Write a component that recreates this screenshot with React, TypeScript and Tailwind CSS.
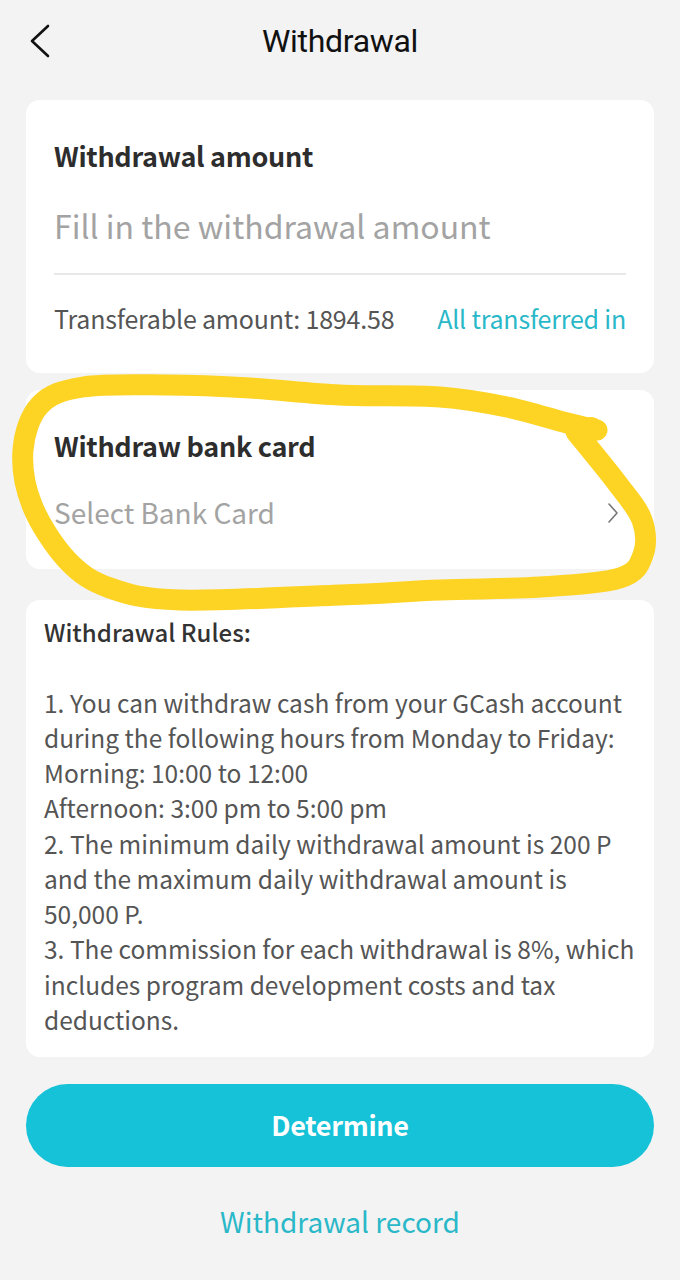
import React from 'react'

const sans = "font-['Noto_Sans_CJK_SC','Noto_Sans',sans-serif]"

// hand-drawn highlight round the bank card box
const mark: [number, number][] = [
  [597, 430], [567, 423], [507, 407], [440, 397], [340, 395], [250, 388], [167, 385],
  [83, 387], [40, 405], [23, 450], [32, 505], [67, 560], [110, 588], [180, 600],
  [340, 595], [440, 590], [540, 587], [620, 578], [643, 555], [642, 520], [617, 483], [576, 432],
]

function smoothPath(pts: [number, number][]) {
  let d = `M${pts[0][0]},${pts[0][1]}`
  for (let i = 0; i < pts.length - 1; i++) {
    const p0 = pts[i - 1] ?? pts[i]
    const p1 = pts[i]
    const p2 = pts[i + 1]
    const p3 = pts[i + 2] ?? p2
    const c1x = p1[0] + (p2[0] - p0[0]) / 6
    const c1y = p1[1] + (p2[1] - p0[1]) / 6
    const c2x = p2[0] - (p3[0] - p1[0]) / 6
    const c2y = p2[1] - (p3[1] - p1[1]) / 6
    d += ` C${c1x},${c1y} ${c2x},${c2y} ${p2[0]},${p2[1]}`
  }
  return d
}

// lines broken as the app shows them
const rules = [
  '1. You can withdraw cash from your GCash account',
  'during the following hours from Monday to Friday:',
  'Morning: 10:00 to 12:00',
  'Afternoon: 3:00 pm to 5:00 pm',
  '2. The minimum daily withdrawal amount is 200 P',
  'and the maximum daily withdrawal amount is',
  '50,000 P.',
  '3. The commission for each withdrawal is 8%, which',
  'includes program development costs and tax',
  'deductions.',
]

export default function App() {
  return (
    <div className="relative w-[680px] min-h-[1280px] bg-[#f3f3f3] overflow-hidden">
      {/* Header */}
      <div className="grid grid-cols-[80px_1fr_80px] items-center h-[82px]">
        <button className="flex items-center pl-[28px] h-full">
          <svg width="24" height="34" viewBox="0 0 24 34" fill="none">
            <path d="M20 2 L4 17 L20 32" stroke="#111" strokeWidth="2.6" strokeLinecap="round" strokeLinejoin="round" />
          </svg>
        </button>
        <h1 className="text-center text-[32px] text-[#111] font-['Roboto',sans-serif] tracking-[-0.3px]">Withdrawal</h1>
        <div />
      </div>

      <div className={`flex flex-col px-[26px] pt-[18px] ${sans}`}>
        {/* Amount card */}
        <div className="bg-white rounded-[14px] px-[28px] pt-[36px] pb-[37px]">
          <div className="text-[27px] leading-[40px] font-bold text-[#2d2d2d] tracking-[-0.3px]">Withdrawal amount</div>
          <input
            type="text"
            placeholder="Fill in the withdrawal amount"
            className="mt-[27px] w-full text-[32px] leading-[44px] h-[44px] bg-transparent outline-none text-[#333] placeholder:text-[#a3a3a3]"
          />
          <div className="mt-[26px] h-[2px] bg-[#e8e8e8]" />
          <div className="mt-[25px] flex items-center justify-between text-[25px] leading-[36px]">
            <span className="text-[#555] tracking-[-0.2px]">Transferable amount: 1894.58</span>
            <button className="text-[#2ab8c9] tracking-[-0.2px]">All transferred in</button>
          </div>
        </div>

        {/* Bank card */}
        <div className="mt-[17px] bg-white rounded-[14px] px-[28px] pt-[36px] pb-[37px]">
          <div className="text-[27px] leading-[40px] font-bold text-[#2d2d2d] tracking-[-0.3px]">Withdraw bank card</div>
          <button className="mt-[26px] w-full flex items-center justify-between h-[40px]">
            <span className="text-[28px] leading-[40px] text-[#a3a3a3]">Select Bank Card</span>
            <svg width="14" height="22" viewBox="0 0 14 22" fill="none" className="mr-[6px] mt-[2px]">
              <path d="M3 2 L11 11 L3 20" stroke="#777" strokeWidth="1.6" strokeLinecap="round" strokeLinejoin="round" />
            </svg>
          </button>
        </div>

        {/* Rules */}
        <div className="mt-[31px] bg-white rounded-[14px] pl-[18px] pr-[12px] pt-[14px] pb-[20px] leading-[35.25px]">
          <div className="text-[24px] font-medium text-[#333]">Withdrawal Rules:</div>
          <div className="h-[35.25px]" />
          {rules.map((line) => (
            <div key={line} className="text-[24.5px] text-[#555] whitespace-nowrap">{line}</div>
          ))}
        </div>

        <button className="mt-[27px] h-[83px] rounded-full bg-[#15c2d7] text-white text-[27px] font-semibold tracking-[-0.3px]">
          Determine
        </button>

        <button className="mt-[32px] text-[28px] leading-[44px] text-[#2ab8c9] self-center">Withdrawal record</button>
      </div>

      <svg className="absolute inset-0 pointer-events-none" width="680" height="1280" viewBox="0 0 680 1280" fill="none">
        <path d={smoothPath(mark)} stroke="#fdd324" strokeWidth="21" strokeLinecap="round" strokeLinejoin="round" />
        <circle cx="591" cy="429" r="12" fill="#fdd324" />
      </svg>
    </div>
  )
}
